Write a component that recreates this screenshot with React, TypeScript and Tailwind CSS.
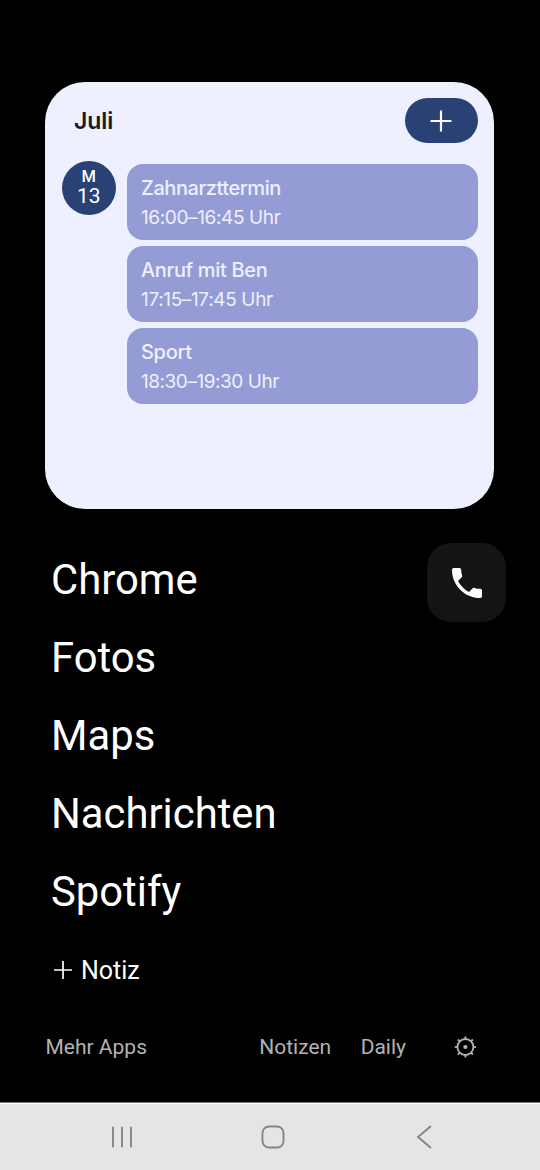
import React from 'react';

interface CalendarEvent {
  title: string;
  time: string;
  titleClass: string;
  timeClass: string;
}

const events: CalendarEvent[] = [
  { title: 'Zahnarzttermin', time: '16:00–16:45 Uhr', titleClass: 'tracking-[-0.43px]', timeClass: 'tracking-[-0.38px]' },
  { title: 'Anruf mit Ben', time: '17:15–17:45 Uhr', titleClass: 'tracking-[-0.34px]', timeClass: 'tracking-[-0.35px]' },
  { title: 'Sport', time: '18:30–19:30 Uhr', titleClass: 'tracking-[-0.3px]', timeClass: 'tracking-[-0.46px]' },
];

const apps = ['Chrome', 'Fotos', 'Maps', 'Nachrichten', 'Spotify'];

const GearIcon: React.FC = () => (
  <svg className="-mt-0.5 h-[22px] w-[22px]" viewBox="0 0 22 22" fill="none" stroke="currentColor" strokeWidth="1.8">
    <circle cx="11.4" cy="11" r="8" />
    <circle cx="11.4" cy="11" r="2.1" fill="currentColor" stroke="none" />
    {[0, 45, 90, 135, 180, 225, 270, 315].map((angle) => (
      <path key={angle} d="M11.4 0.4v2.4" transform={`rotate(${angle} 11.4 11)`} />
    ))}
  </svg>
);

const CalendarWidget: React.FC = () => (
  <section className="ml-[45px] h-[427px] w-[449px] rounded-[40px] bg-[#eeefff] pl-[17px] pr-4 pt-4 font-['Inter',sans-serif]">
    <div className="flex h-[45px] items-center justify-between pl-3">
      <h1 className="pt-0.5 text-[23px] font-semibold leading-none tracking-[-0.1px] text-[#1a1b21]">Juli</h1>
      <button className="flex h-[45px] w-[73.5px] items-center justify-center rounded-[23px] bg-[#294175] text-white">
        <svg className="h-[22px] w-[22px]" viewBox="0 0 22 22" stroke="currentColor" strokeWidth="2.2">
          <path d="M11 0.5v21M0.5 11h21" />
        </svg>
      </button>
    </div>

    <div className="mt-[18px] flex gap-[11.5px]">
      <div className="flex h-[53.5px] w-[53.5px] flex-col items-center rounded-full bg-[#294175] pt-[7px] font-['Roboto',sans-serif] text-white">
        <span className="text-[16.5px] font-medium leading-[18px]">M</span>
        <span className="text-[21px] leading-[20px]">13</span>
      </div>
      <div className="mt-[3px] flex flex-1 flex-col gap-1.5">
        {events.map((event) => (
          <div key={event.title} className="h-[76px] rounded-2xl bg-[#959cd5] pl-3.5 pt-[9px] text-[#eeefff]">
            <div className={`text-[20px] font-medium leading-[30px] ${event.titleClass}`}>{event.title}</div>
            <div className={`text-[19px] leading-[30px] ${event.timeClass}`}>{event.time}</div>
          </div>
        ))}
      </div>
    </div>
  </section>
);

const NavigationBar: React.FC = () => (
  <nav className="flex h-[67px] items-center border-t border-white bg-[#e5e5e5] text-[#858585]">
    <div className="flex w-[244px] justify-center">
      <svg className="h-6 w-6" viewBox="0 0 24 24" stroke="currentColor" strokeWidth="1.9" strokeLinecap="round">
        <path d="M3 2.5v19M12 2.5v19M21 2.5v19" />
      </svg>
    </div>
    <div className="flex w-[58px] justify-center">
      <svg className="h-6 w-6" viewBox="0 0 24 24" fill="none" stroke="currentColor" strokeWidth="1.9">
        <rect x="1.5" y="1.5" width="21" height="21" rx="6.5" />
      </svg>
    </div>
    <div className="flex flex-1 justify-center">
      <svg className="h-6 w-6" viewBox="0 0 24 24" fill="none" stroke="currentColor" strokeWidth="1.9" strokeLinecap="round">
        <path d="M21.4 1.5L9 12L21.4 22.5" />
      </svg>
    </div>
  </nav>
);

const App: React.FC = () => {
  return (
    <div className="flex h-[1170px] w-[540px] flex-col overflow-hidden bg-black pt-[82px] font-['Roboto',sans-serif]">
      <CalendarWidget />

      <main className="mt-8 flex justify-between pl-[51px] pr-[34px]">
        <div className="text-white">
          {apps.map((app) => (
            <div key={app} className="h-[78px] text-[41.8px] leading-[78px]">{app}</div>
          ))}
          <button className="flex h-[78px] items-center gap-[9px] pl-[3px] text-[25px]">
            <svg className="h-[18px] w-[18px]" viewBox="0 0 18 18" stroke="currentColor" strokeWidth="1.7">
              <path d="M9 0v18M0 9h18" />
            </svg>
            <span className="pt-0.5">Notiz</span>
          </button>
        </div>
        <button className="mt-0.5 flex h-[79px] w-[79px] items-center justify-center rounded-3xl bg-[#141414] text-white">
          <svg className="h-10 w-10" viewBox="0 0 24 24" fill="currentColor">
            <path d="M6.62 10.79c1.44 2.83 3.76 5.14 6.59 6.59l2.2-2.2c.27-.27.67-.36 1.02-.24 1.12.37 2.33.57 3.57.57.55 0 1 .45 1 1V20c0 .55-.45 1-1 1-9.39 0-17-7.61-17-17 0-.55.45-1 1-1h3.5c.55 0 1 .45 1 1 0 1.25.2 2.45.57 3.57.11.35.03.74-.25 1.02l-2.2 2.2z" />
          </svg>
        </button>
      </main>

      <footer className="mt-6 flex h-[30px] items-center pl-[45.5px] pr-[64px] text-[21px] text-[#b3b3b3]">
        <span>Mehr Apps</span>
        <span className="ml-auto">Notizen</span>
        <span className="ml-[29.5px] mr-[48px]">Daily</span>
        <GearIcon />
      </footer>

      <div className="mt-auto border-t border-[#777]">
        <NavigationBar />
      </div>
    </div>
  );
};

export default App;
